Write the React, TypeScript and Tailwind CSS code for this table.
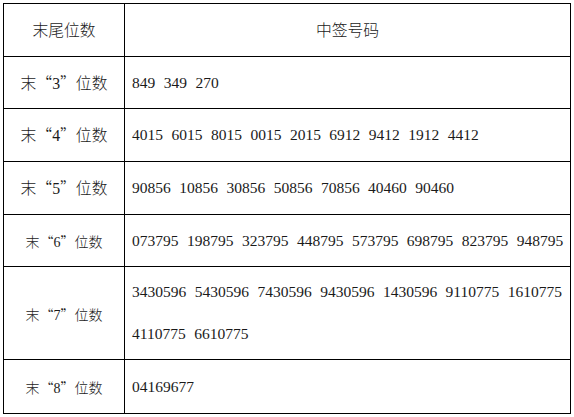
import React from "react";

const rows: { label: string; size: "lg" | "sm"; lines: string[]; h: string }[] = [
  { label: "3", size: "lg", lines: ["849 349 270"], h: "h-[52px]" },
  { label: "4", size: "lg", lines: ["4015 6015 8015 0015 2015 6912 9412 1912 4412"], h: "h-[53px]" },
  { label: "5", size: "lg", lines: ["90856 10856 30856 50856 70856 40460 90460"], h: "h-[53px]" },
  { label: "6", size: "sm", lines: ["073795 198795 323795 448795 573795 698795 823795 948795"], h: "h-[52px]" },
  {
    label: "7",
    size: "sm",
    lines: ["3430596 5430596 7430596 9430596 1430596 9110775 1610775", "4110775 6610775"],
    h: "h-[93px]",
  },
  { label: "8", size: "sm", lines: ["04169677"], h: "h-[54px]" },
];

function Label({ n, size }: { n: string; size: "lg" | "sm" }) {
  return (
    <span className={size === "lg" ? "text-[15.8px]" : "text-[14px]"}>
      末<span className="inline-block w-[1em] text-right">“</span>
      <span className="font-['Liberation_Serif',serif]">{n}</span>
      <span className="inline-block w-[1em] text-left">”</span>位数
    </span>
  );
}

export default function App() {
  return (
    <div className="w-[574px] h-[417px] bg-white pt-[3px] pl-[3px]">
      <table className="w-[568px] border-collapse text-[#1a1a1a] font-light font-['Noto_Sans_CJK_SC',sans-serif]">
        <thead>
          <tr className="h-[53px]">
            <th className="w-[121px] border border-black font-light text-[15.8px] text-center">末尾位数</th>
            <th className="border border-black font-light text-[15.8px] text-center">中签号码</th>
          </tr>
        </thead>
        <tbody>
          {rows.map((r) => (
            <tr key={r.label} className={r.h}>
              <td className="border border-black text-center align-middle">
                <Label n={r.label} size={r.size} />
              </td>
              <td className="border border-black pl-[7px] align-middle font-normal font-['Liberation_Serif',serif] text-[15.5px] [word-spacing:4.6px]">
                {r.lines.map((l) => (
                  <div key={l} className="leading-[42px] whitespace-nowrap">
                    {l}
                  </div>
                ))}
              </td>
            </tr>
          ))}
        </tbody>
      </table>
    </div>
  );
}
